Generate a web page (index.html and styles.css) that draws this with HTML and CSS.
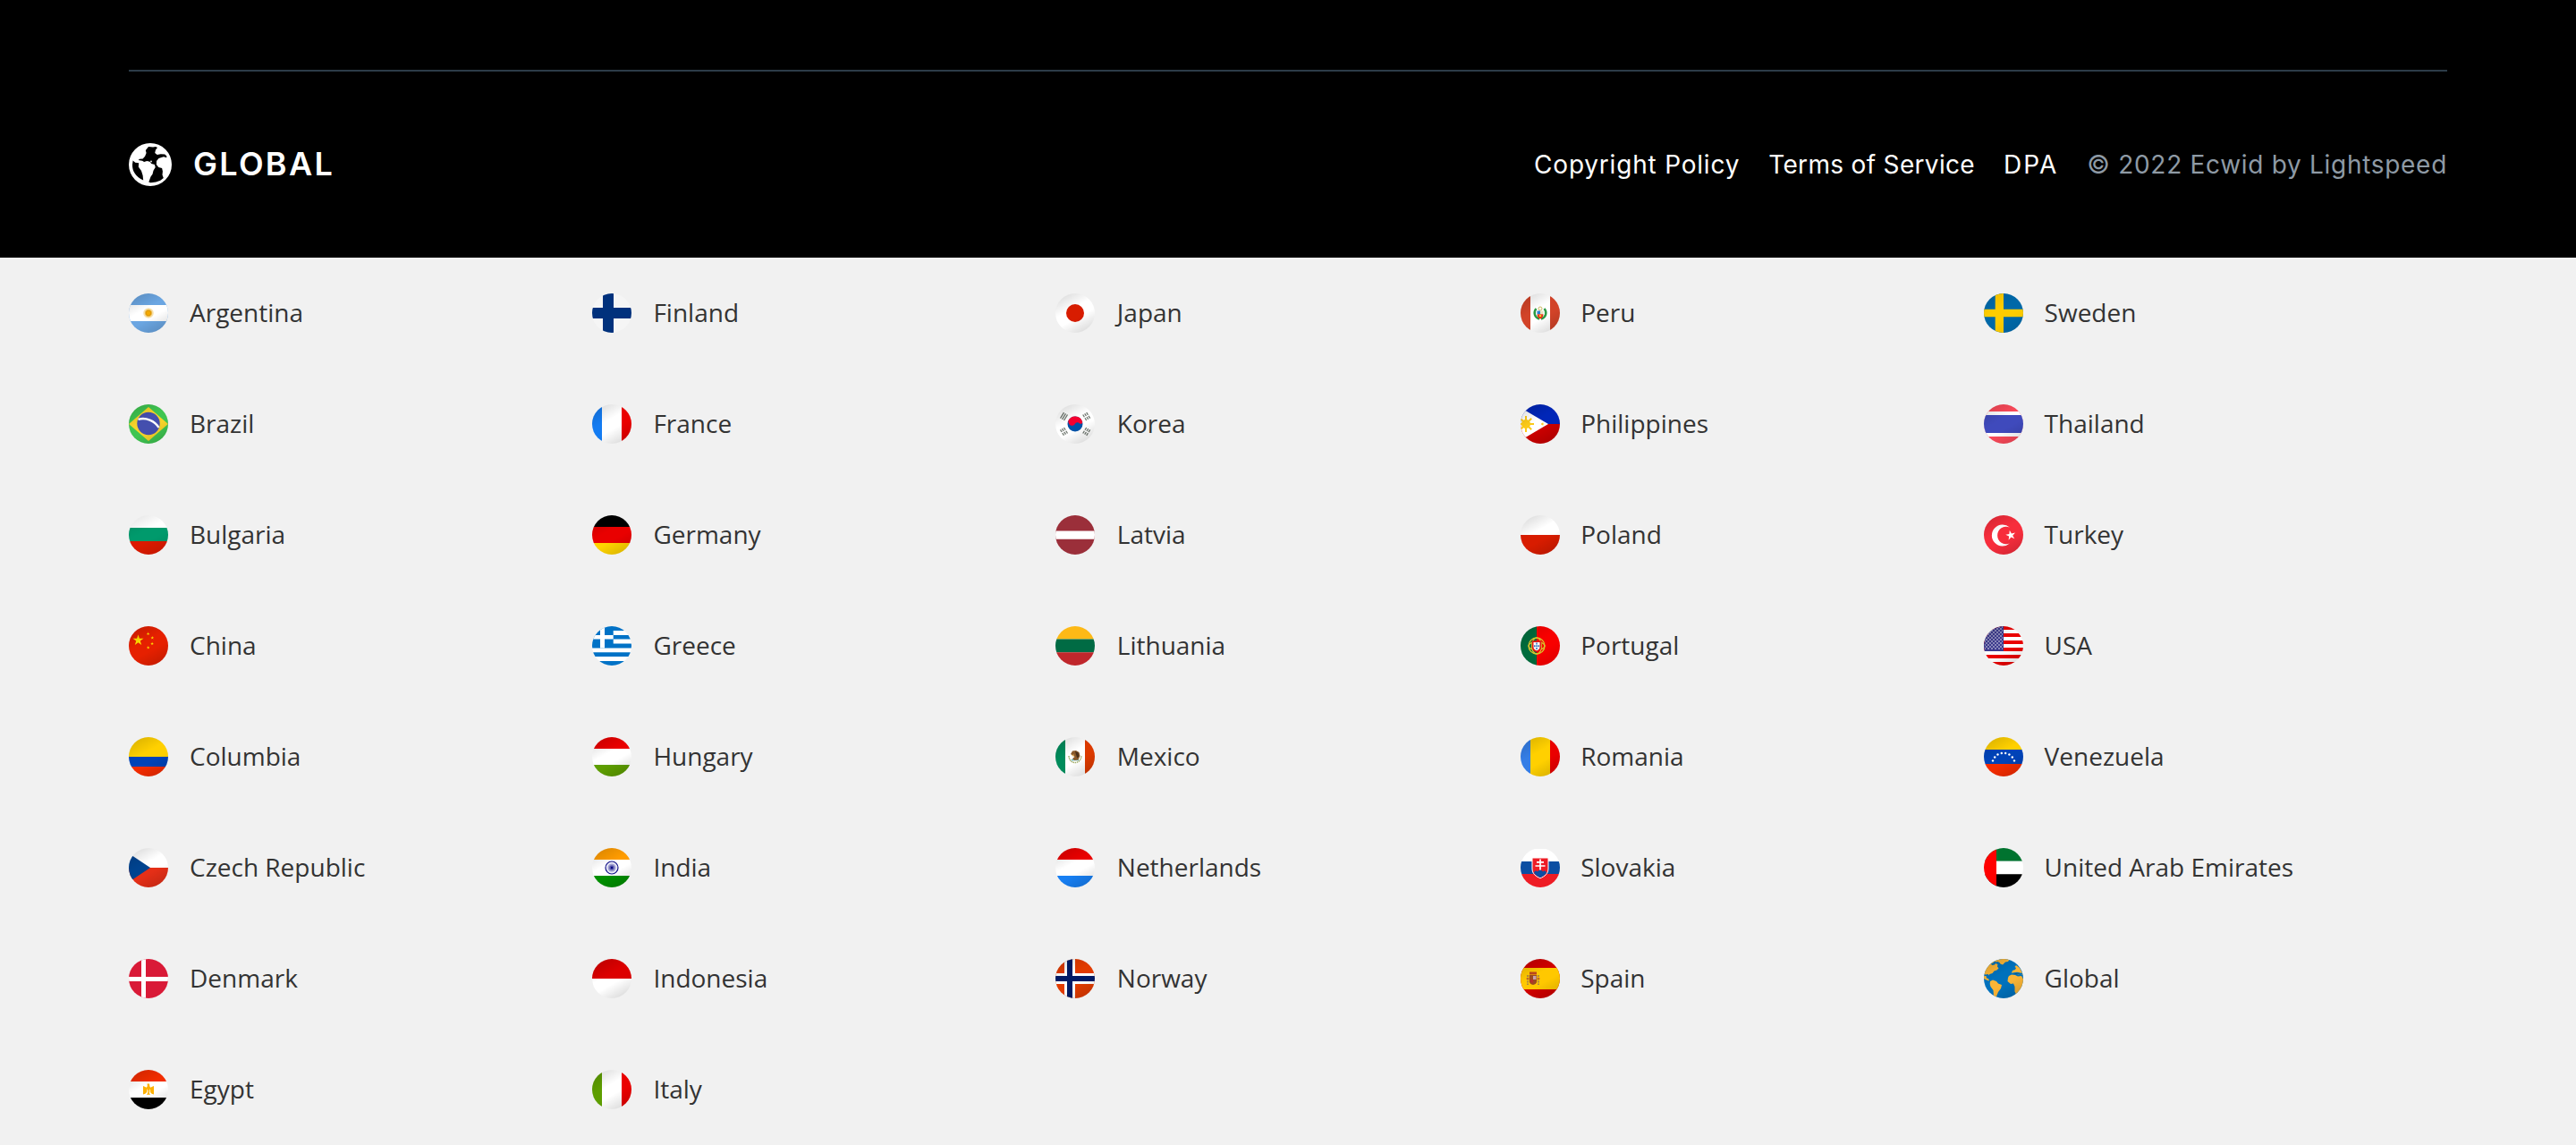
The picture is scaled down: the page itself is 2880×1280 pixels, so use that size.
FILE: index.html
```html
<!DOCTYPE html>
<html lang="en">
<head>
<meta charset="utf-8">
<title>Ecwid by Lightspeed</title>
<link rel="stylesheet" href="styles.css">
</head>
<body>
<svg class="defs" aria-hidden="true">
  <defs>
    <linearGradient id="shade" gradientUnits="userSpaceOnUse" x1="11" y1="2" x2="33" y2="42">
      <stop offset="0" stop-opacity=".12"/><stop offset=".38" stop-opacity="0"/>
      <stop offset=".62" stop-opacity="0"/><stop offset="1" stop-opacity=".13"/>
    </linearGradient>
    <pattern id="stars" width="4" height="4" patternUnits="userSpaceOnUse">
      <circle cx="1" cy="1" r=".75" fill="#fff"/><circle cx="3" cy="3" r=".75" fill="#fff"/>
    </pattern>
    <polygon id="star" points="0,-1 .2245,-.309 .951,-.309 .363,.118 .588,.809 0,.382 -.588,.809 -.363,.118 -.951,-.309 -.2245,-.309"/>
    <rect id="sh" width="44" height="44" fill="url(#shade)"/>
  </defs>
</svg>

<footer class="footer">
  <div class="footer__bar">
    <a class="region">
      <svg class="region__icon" viewBox="0 0 48 48">
        <circle cx="24" cy="24" r="24" fill="#fff"/>
        <path fill="#000" d="M22 4l5 .5 3-.4 2 1-2 2.400-.8 3.500 2.500 2 4-.8 4.500.2 2.200 2-.2 1.800-3.200-.9-2.500.8-3 1-2.500 3-.1 4 2.400 3 3.800 1 .8 3.400-.4 4 1.300 3.500-3.500 2.800-5 1.800-6 .6-2-.6 2.200-6.200 2-2.600 1-4 2.200-3.800-.8-3-3.600-1-1.800-2.300-3.200-.6-3.200.9-2-1.300-4.500-.7 1.500-1.200 3.500-.3 2.500-2.800 1.500-3.700-.8-3z"/>
        <path fill="#000" d="M4.600 19.500l2.600 2.200 4 .6-.4 4.200 3.200 4.500 1.600 5 .6 5.500C8 37.800 3.600 31 4 24z"/>
        <circle cx="25" cy="20.500" r=".9" fill="#fff"/>
      </svg>
      <span class="region__name">GLOBAL</span>
    </a>
    <nav class="legal">
      <a class="legal__policy">Copyright Policy</a>
      <a class="legal__terms">Terms of Service</a>
      <a class="legal__dpa">DPA</a>
      <span class="legal__copy">© 2022 Ecwid by Lightspeed</span>
    </nav>
  </div>
</footer>

<main class="countries">
  <ul class="col">
    <li><svg class="flag" viewBox="0 0 44 44"><path fill="#6ba6e2" d="M0 0h44v44H0z"/><path fill="#fff" d="M0 13h44v18H0z"/><circle cx="22" cy="22" r="5.800" fill="#f7e2b0"/><circle cx="22" cy="22" r="4.200" fill="#edbd52"/><circle cx="22" cy="22" r="2.800" fill="#f4a900" stroke="#d99000" stroke-width=".8"/><use href="#sh"/></svg>Argentina</li>
    <li><svg class="flag" viewBox="0 0 44 44"><path fill="#3fc551" d="M0 0h44v44H0z"/><path fill="#f6d32a" d="M0 22L22 3l22 19-22 19z"/><circle cx="22" cy="21.500" r="12.700" fill="#444fae"/><path d="M10.500 16.800C19 14.500 29 18 33.500 26" fill="none" stroke="#fff" stroke-width="2.400"/><use href="#sh"/></svg>Brazil</li>
    <li><svg class="flag" viewBox="0 0 44 44"><path fill="#fff" d="M0 0h44v14H0z"/><path fill="#009a6c" d="M0 14h44v15H0z"/><path fill="#dc1a00" d="M0 29h44v15H0z"/><use href="#sh" opacity=".7"/></svg>Bulgaria</li>
    <li><svg class="flag" viewBox="0 0 44 44"><path fill="#e62000" d="M0 0h44v44H0z"/><g fill="#ffde00"><use href="#star" transform="translate(10.500 15.800) scale(6.300)"/><use href="#star" transform="translate(21.600 8.500) scale(2)"/><use href="#star" transform="translate(26.300 13) scale(2)"/><use href="#star" transform="translate(26.100 19.500) scale(2)"/><use href="#star" transform="translate(21.700 24) scale(2)"/></g><use href="#sh"/></svg>China</li>
    <li><svg class="flag" viewBox="0 0 44 44"><path fill="#ffd000" d="M0 0h44v22H0z"/><path fill="#0043b8" d="M0 22h44v11H0z"/><path fill="#f52c00" d="M0 33h44v11H0z"/><use href="#sh"/></svg>Columbia</li>
    <li><svg class="flag" viewBox="0 0 44 44"><path fill="#fff" d="M0 0h44v22H0z"/><path fill="#e52f17" d="M0 22h44v22H0z"/><path fill="#00438f" d="M0 6l24 16L0 38z"/><use href="#sh"/></svg>Czech Republic</li>
    <li><svg class="flag" viewBox="0 0 44 44"><path fill="#d91a37" d="M0 0h44v44H0z"/><path fill="#fff" d="M14 0h5v44h-5zM0 20h44v5H0z"/></svg>Denmark</li>
    <li><svg class="flag" viewBox="0 0 44 44"><path fill="#f22d00" d="M0 0h44v13H0z"/><path fill="#fff" d="M0 13h44v18H0z"/><path d="M0 31h44v13H0z"/><path fill="#fdb000" d="M20.500 15.500h2.500l.4 3 .8 1.300 3.800-1.800v9.500l-2.200-.7-2.500-2-.7 1 1.500 2h-4.200l1.500-2-.7-1-2.500 2-2.200.7V18l3.800 1.800 1-1.500z"/><path fill="#fff" d="M20.500 21l1.500 3-2.500 3zM24 21l-1.500 3 2 2.500z" opacity=".7"/><use href="#sh"/></svg>Egypt</li>
  </ul>
  <ul class="col">
    <li><svg class="flag" viewBox="0 0 44 44"><path fill="#f5f5f5" d="M0 0h44v44H0z"/><path fill="#00317c" d="M12 0h12v44H12zM0 16h44v12H0z"/></svg>Finland</li>
    <li><svg class="flag" viewBox="0 0 44 44"><path fill="#147cf2" d="M0 0h11v44H0z"/><path fill="#fff" d="M11 0h22v44H11z"/><path fill="#ea0000" d="M33 0h11v44H33z"/><use href="#sh"/></svg>France</li>
    <li><svg class="flag" viewBox="0 0 44 44"><path d="M0 0h44v13H0z"/><path fill="#e90000" d="M0 13h44v18H0z"/><path fill="#ffd400" d="M0 31h44v13H0z"/><use href="#sh"/></svg>Germany</li>
    <li><svg class="flag" viewBox="0 0 44 44"><path fill="#fff" d="M0 0h44v44H0z"/><path fill="#0072c6" d="M0 0h44v5H0zM0 10h44v4.600H0zM0 19.500h44v4.900H0zM0 29.300h44v4.700H0zM0 39h44v5H0zM0 0h23.700v24.400H0z"/><path fill="#fff" d="M9 0h5v24.400H9zM0 10h23.700v4.500H0z"/></svg>Greece</li>
    <li><svg class="flag" viewBox="0 0 44 44"><path fill="#ea0000" d="M0 0h44v13H0z"/><path fill="#fff" d="M0 13h44v18H0z"/><path fill="#5e9e00" d="M0 31h44v13H0z"/><use href="#sh"/></svg>Hungary</li>
    <li><svg class="flag" viewBox="0 0 44 44"><path fill="#ff9c00" d="M0 0h44v13H0z"/><path fill="#fff" d="M0 13h44v18H0z"/><path fill="#008f00" d="M0 31h44v13H0z"/><circle cx="22" cy="22" r="7" fill="#e9e9f5" stroke="#14148a" stroke-width="1.200"/><circle cx="22" cy="22" r="4.500" fill="#a0a0d0"/><circle cx="22" cy="22" r="2.700" fill="#5858ac"/><circle cx="22" cy="22" r="1.200" fill="#000080"/><use href="#sh"/></svg>India</li>
    <li><svg class="flag" viewBox="0 0 44 44"><path fill="#dc0000" d="M0 0h44v22H0z"/><path fill="#fff" d="M0 22h44v22H0z"/><use href="#sh"/></svg>Indonesia</li>
    <li><svg class="flag" viewBox="0 0 44 44"><path fill="#5e9e00" d="M0 0h11v44H0z"/><path fill="#fff" d="M11 0h22v44H11z"/><path fill="#ea0000" d="M33 0h11v44H33z"/><use href="#sh"/></svg>Italy</li>
  </ul>
  <ul class="col col--3">
    <li><svg class="flag" viewBox="0 0 44 44"><path fill="#fff" d="M0 0h44v44H0z"/><circle cx="22" cy="22" r="10" fill="#d81c00"/><use href="#sh"/></svg>Japan</li>
    <li><svg class="flag" viewBox="0 0 44 44"><path fill="#fff" d="M0 0h44v44H0z"/><circle cx="22" cy="22" r="8.500" fill="#0052a8"/><path fill="#f5002f" d="M14.400 18.200A8.500 8.500 0 0 1 30 19.200C30.500 22 28 22.500 26 20.800c-2.500-1.200-3.500.2-4.500 1.600-2.500 2.800-7.500 1-7.100-4.200z"/><g stroke="#6d756d" stroke-width="1.300" fill="none"><path d="M5.500 15.700l4-6.500M7.500 16.900l4-6.500M9.500 18l4-6.500"/><path stroke-dasharray="3.200 1.200" d="M30.700 11.500l4 6.500M32.700 10.300l4 6.500M34.700 9.200l4 6.500"/><path stroke-dasharray="3.200 1.200" d="M5.500 28.300l4 6.500M7.500 27.100l4 6.500M9.500 26l4 6.500"/><path stroke-dasharray="3.200 1.200" d="M30.700 32.500l4-6.500M32.700 33.700l4-6.500M34.700 34.800l4-6.500"/></g><use href="#sh"/></svg>Korea</li>
    <li><svg class="flag" viewBox="0 0 44 44"><path fill="#9b2f3a" d="M0 0h44v44H0z"/><path fill="#fff" d="M0 17.500h44v9.200H0z"/></svg>Latvia</li>
    <li><svg class="flag" viewBox="0 0 44 44"><path fill="#fdb916" d="M0 0h44v14.500H0z"/><path fill="#006b44" d="M0 14.500h44v14.700H0z"/><path fill="#c0272c" d="M0 29.200h44V44H0z"/></svg>Lithuania</li>
    <li><svg class="flag" viewBox="0 0 44 44"><path fill="#008c5c" d="M0 0h11v44H0z"/><path fill="#fff" d="M11 0h22v44H11z"/><path fill="#dc3a00" d="M33 0h11v44H33z"/><path d="M15 21c.5 10 13.500 10 14 0" fill="none" stroke="#a3ad6a" stroke-width="1.500" stroke-dasharray="1.500 .7"/><path d="M18 25.500h8" stroke="#5cb5c0" stroke-width="1.600"/><path fill="#8a5a2c" d="M17 19l2-3.500 4-.5 3.500 2 1 4-2 4.500-4.500.5-2-2 2.500-2z"/><path fill="#49301c" d="M22 16l3.500 1.500.8 4-2 2-1-3z"/><path fill="#e8b45c" d="M18 20l3-.5-1 2.500z"/><use href="#sh"/></svg>Mexico</li>
    <li><svg class="flag" viewBox="0 0 44 44"><path fill="#ea0000" d="M0 0h44v13H0z"/><path fill="#fff" d="M0 13h44v18H0z"/><path fill="#177ff3" d="M0 31h44v13H0z"/><use href="#sh"/></svg>Netherlands</li>
    <li><svg class="flag" viewBox="0 0 44 44"><path fill="#e23b00" d="M0 0h44v44H0z"/><path fill="#fff" d="M10 0h12v44H10zM0 16h44v12H0z"/><path fill="#001a66" d="M13 0h6v44h-6zM0 19h44v6H0z"/><use href="#sh"/></svg>Norway</li>
  </ul>
  <ul class="col col--4">
    <li><svg class="flag" viewBox="0 0 44 44"><path fill="#d24328" d="M0 0h11v44H0z"/><path fill="#fff" d="M11 0h22v44H11z"/><path fill="#d24328" d="M33 0h11v44H33z"/><path d="M17.500 17c-3.500 4-2 10 3.500 11.500M26.500 17c3.500 4 2 10-3.500 11.500" fill="none" stroke="#2c9a45" stroke-width="2.400"/><circle cx="22" cy="17" r="2" fill="none" stroke="#c9b860" stroke-width="1"/><path fill="#2d7fd0" d="M18.500 19.500H22v3.700h-3.500z"/><path fill="#e8e4c0" d="M22 19.500h3.500v3.700H22z"/><path fill="#e23218" d="M18.500 23.200h7c0 3-1.500 4.800-3.500 5.300-2-.5-3.500-2.300-3.500-5.300z"/><circle cx="22" cy="25" r="1.300" fill="#f5c81e"/><use href="#sh"/></svg>Peru</li>
    <li><svg class="flag" viewBox="0 0 44 44"><path fill="#0026b8" d="M0 0h44v22H0z"/><path fill="#ca0000" d="M0 22h44v22H0z"/><path fill="#fff" d="M0 3.700L31 22 0 40.300z"/><g fill="#fbc918" stroke="#fbc918"><circle cx="6" cy="22" r="4.600"/><path stroke-width="2" d="M6 13v18M-3 22h18M-.2 15.800l12.400 12.400M12.200 15.800L-.2 28.200"/></g><use href="#star" fill="#fbc918" transform="translate(24.500 22) rotate(90) scale(2.300)"/><use href="#sh"/></svg>Philippines</li>
    <li><svg class="flag" viewBox="0 0 44 44"><path fill="#fff" d="M0 0h44v22H0z"/><path fill="#d81c00" d="M0 22h44v22H0z"/><use href="#sh"/></svg>Poland</li>
    <li><svg class="flag" viewBox="0 0 44 44"><path fill="#006b3c" d="M0 0h18v44H0z"/><path fill="#f80000" d="M18 0h26v44H18z"/><g fill="none" stroke="#d9c62c" stroke-width="1.300"><circle cx="18" cy="22" r="9"/><ellipse cx="18" cy="22" rx="9" ry="4.500"/><ellipse cx="18" cy="22" rx="5.500" ry="9"/></g><path fill="#e01818" d="M12.800 16.200h10.400v7c0 3.500-2.500 5.300-5.200 5.900-2.700-.6-5.200-2.400-5.200-5.900z"/><path fill="#fff" d="M14.500 18h7v5c0 2.500-1.600 3.700-3.500 4.200-1.900-.5-3.500-1.700-3.500-4.200z"/><path fill="#3878c0" d="M17.200 18.500h1.600v2h-1.600zM15 21.300h1.600v2H15zM17.200 21.300h1.600v2h-1.600zM19.400 21.300H21v2h-1.600zM17.200 24.100h1.600v2h-1.600z"/><use href="#sh" opacity=".7"/></svg>Portugal</li>
    <li><svg class="flag" viewBox="0 0 44 44"><path fill="#357ee6" d="M0 0h11v44H0z"/><path fill="#ffd000" d="M11 0h22v44H11z"/><path fill="#ea0000" d="M33 0h11v44H33z"/><use href="#sh"/></svg>Romania</li>
    <li><svg class="flag" viewBox="0 0 44 44"><path fill="#fff" d="M0 1h44v14H0z"/><path fill="#0b4ea2" d="M0 15h44v14H0z"/><path fill="#ee1c25" d="M0 29h44v15H0z"/><path fill="#ee1c25" stroke="#fff" stroke-width="1" d="M13 11h18v12c0 6-4 8.500-9 10.800C17 31.500 13 29 13 23z"/><path fill="#0b4ea2" d="M15 27.500c1-2.300 3-2.300 4-1 1-2.500 5-2.500 6 0 1-1.300 3-1.300 4 1-1.300 2.500-4 4.200-7 5.700-3-1.500-5.700-3.200-7-5.700z"/><path stroke="#fff" stroke-width="1.700" d="M22 12.500v12M18 15.800h8M16.500 20h11"/></svg>Slovakia</li>
    <li><svg class="flag" viewBox="0 0 44 44"><path fill="#d00000" d="M0 0h44v44H0z"/><path fill="#ffc800" d="M0 10h44v24H0z"/><path fill="#c0481c" d="M10 14.500h8v3h-8z"/><path fill="#9c4a20" d="M9.800 18h8.400v7c0 2.500-2 3.500-4.200 4-2.200-.5-4.200-1.500-4.200-4z"/><path fill="#c8a0a8" d="M14 19h3.500v4H14z"/><path fill="#b8302a" d="M10.500 23h3.500v4l-3-1z"/><path stroke="#9a7b50" stroke-width="1.600" stroke-dasharray="2.200 1" d="M8 18v11M20 18v11"/><path stroke="#c33c20" stroke-width="1" d="M6.500 22h3M18.500 22h3"/><use href="#sh"/></svg>Spain</li>
  </ul>
  <ul class="col">
    <li><svg class="flag" viewBox="0 0 44 44"><path fill="#0068a8" d="M0 0h44v44H0z"/><path fill="#ffcc00" d="M12.700 0H22v44h-9.300zM0 17.700h44v8.600H0z"/><use href="#sh" opacity=".5"/></svg>Sweden</li>
    <li><svg class="flag" viewBox="0 0 44 44"><path fill="#fc4a5a" d="M0 0h44v44H0z"/><path fill="#fff" d="M0 8h44v28H0z"/><path fill="#3f4abc" d="M0 12h44v20H0z"/><use href="#sh"/></svg>Thailand</li>
    <li><svg class="flag" viewBox="0 0 44 44"><path fill="#f72d3c" d="M0 0h44v44H0z"/><path fill="#fff" d="M28.800 13.500a12 12 0 1 0 0 18 9.800 9.800 0 1 1 0-18z"/><use href="#star" fill="#fff" transform="translate(30 22.400) rotate(-12) scale(5.800)"/><use href="#sh"/></svg>Turkey</li>
    <li><svg class="flag" viewBox="0 0 44 44"><path fill="#fff" d="M0 0h44v44H0z"/><path fill="#ea0000" d="M0 0h44v4H0zM0 8h44v4H0zM0 16h44v4H0zM0 24h44v4H0zM0 32h44v4H0zM0 40h44v4H0z"/><path fill="#3c3a8e" d="M0 0h22v28H0z"/><path fill="url(#stars)" d="M1 0h20v26H1z"/><use href="#sh"/></svg>USA</li>
    <li><svg class="flag" viewBox="0 0 44 44"><path fill="#ffd000" d="M0 0h44v14H0z"/><path fill="#0043b8" d="M0 14h44v16H0z"/><path fill="#f52c00" d="M0 30h44v14H0z"/><g fill="#fff"><circle cx="10" cy="26.400" r="1.200"/><circle cx="12.200" cy="22.500" r="1.200"/><circle cx="15.500" cy="19.500" r="1.200"/><circle cx="19.800" cy="18" r="1.200"/><circle cx="24.200" cy="18" r="1.200"/><circle cx="28.400" cy="19.500" r="1.200"/><circle cx="31.800" cy="22.500" r="1.200"/><circle cx="34" cy="26.400" r="1.200"/></g><use href="#sh"/></svg>Venezuela</li>
    <li><svg class="flag" viewBox="0 0 44 44"><path fill="#00732f" d="M0 0h44v14.700H0z"/><path fill="#fff" d="M0 14.700h44v14.600H0z"/><path d="M0 29.300h44V44H0z"/><path fill="#f00" d="M0 0h14v44H0z"/></svg>United Arab Emirates</li>
    <li><svg class="flag" viewBox="0 0 44 44"><path fill="#0071bc" d="M0 0h44v44H0z"/><g fill="#fbb536"><path d="M0 17V8l6-5 6-1-1.500 2.500-2.500.5 1 2 3-.5 1-1.500 2.500 1-.5 2.500 1.500 2-2 2-3 1-2 2.500-3 1-1.500 1.500L5 17l-3 .5z"/><path d="M0 19l2.500 0L3 21.500l2 .5 1 2.500-2-.5L0 22z"/><path d="M11 2l8-2h10l-2 3-3 .5-3 3-2.500-1L17.500 4l-2-1-2 .5z"/><path d="M7 25l3-1.500 4 1.500 2 2.500 4 1.500-1 4-3 4-2 5h-3l-.5-7-3-4-.8-3z"/><path d="M36 7l4 3 4 8-3-1-3 .3-2-1.300-3 .5-2-1 1-2.500 3-1 1-2-1.500-1z"/><path d="M28 19l3-1.500 4 .5 3 1.500 4-.5 2 3.500v6l-4 7-4 4-1.500-3V31l-1.500-3.500-3 .5-3.500-3 .5-4z"/></g><path stroke="#0071bc" stroke-width="1.400" d="M32 16.300l5-.8 6 1.300"/><use href="#sh"/></svg>Global</li>
  </ul>
</main>
</body>
</html>
```
FILE: styles.css
```css
* {
  box-sizing: border-box;
}

body {
  margin: 0;
  background: #f1f1f1;
  color: #333;
  font-family: "Open Sans", sans-serif;
  overflow: hidden;
}

.defs {
  display: block;
  width: 0;
  height: 0;
}

.footer {
  height: 288px;
  padding: 78px 144px 0;
  background: #000;
  color: #fff;
  font-family: Inter, sans-serif;
}

.footer__bar {
  display: flex;
  justify-content: space-between;
  padding-top: 80px;
  border-top: 2px solid #2c3c48;
}

.region {
  display: flex;
  align-items: center;
  height: 48px;
  gap: 24px;
  font-size: 36px;
  font-weight: 600;
  line-height: 48px;
  letter-spacing: 2.3px;
}

.region__icon {
  width: 48px;
  height: 48px;
}

.region__name {
  margin-top: -2px;
}

.legal {
  display: flex;
  gap: 32px;
  font-size: 28px;
  line-height: 48px;
  white-space: nowrap;
}

.legal__policy {
  letter-spacing: 0.8px;
}

.legal__terms {
  letter-spacing: 0.33px;
}

.legal__dpa {
  letter-spacing: 2px;
}

.legal__copy {
  color: #8e9aa5;
  letter-spacing: 0.7px;
}

.countries {
  display: grid;
  grid-template-columns: repeat(5, 1fr);
  padding: 0 144px;
}

.col {
  margin: 0;
  padding: 0;
  list-style: none;
}

.col li {
  display: flex;
  align-items: center;
  gap: 24px;
  height: 124px;
  padding-bottom: 2px;
  font-size: 28px;
  line-height: 40px;
  white-space: nowrap;
}

.flag {
  flex: none;
  width: 44px;
  height: 44px;
  margin-top: 2px;
  border-radius: 50%;
  overflow: hidden;
}

.col--3 .flag {
  margin-left: -0.8px;
  margin-right: 0.8px;
}

.col--4 .flag {
  margin-left: 0.8px;
  margin-right: -0.8px;
}
```
